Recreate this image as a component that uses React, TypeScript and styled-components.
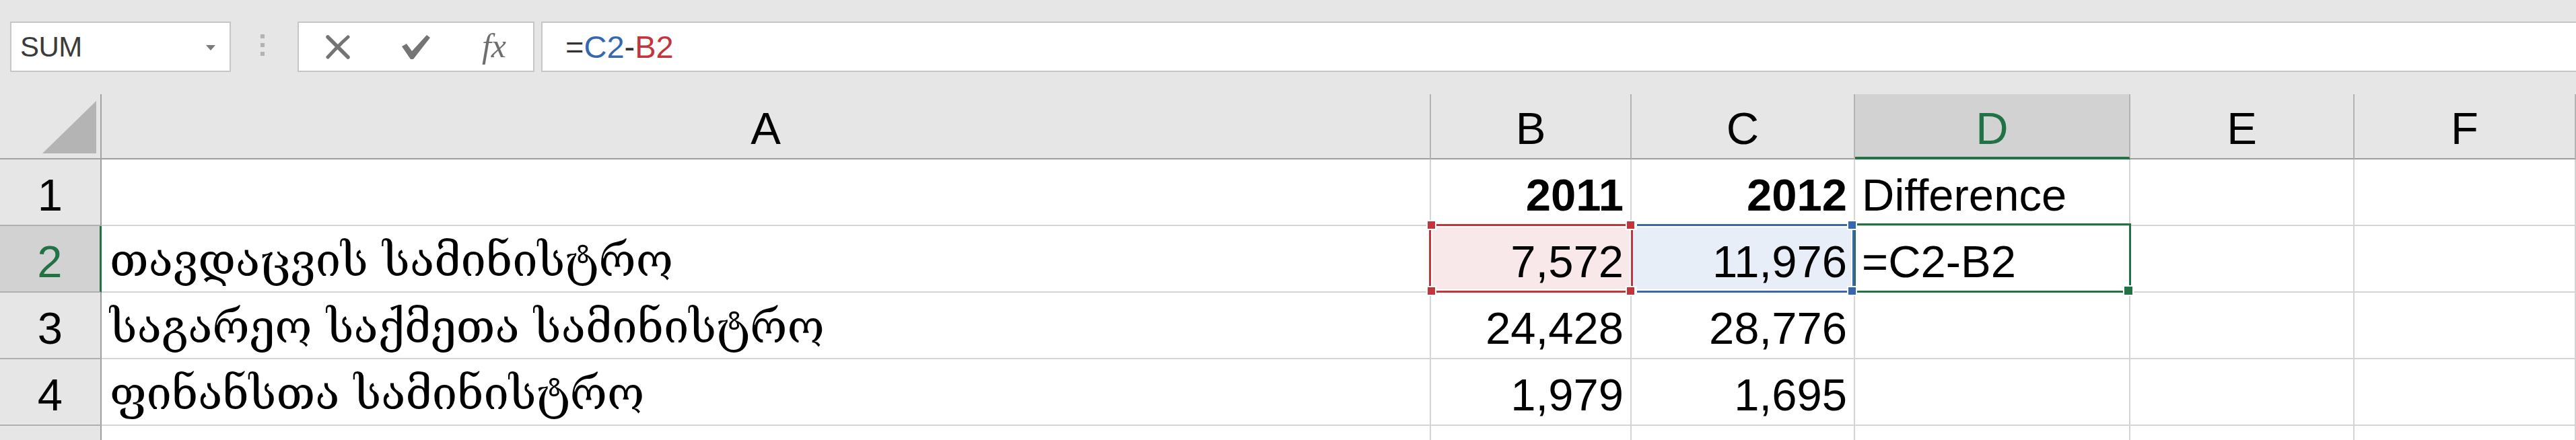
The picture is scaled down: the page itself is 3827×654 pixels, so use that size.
import React from 'react';
import styled, { createGlobalStyle, css } from 'styled-components';

const GREEN = '#217346';
const RED = '#c3343c';
const BLUE = '#3767b1';

const GlobalStyle = createGlobalStyle`
  html, body { margin: 0; padding: 0; background: #ffffff; }
  #root { width: 3827px; height: 654px; }
`;

const Window = styled.div`
  width: 3827px;
  height: 654px;
  overflow: hidden;
  background: #e6e6e6;
  font-family: "Liberation Sans", Arial, sans-serif;
  color: #000;
  display: flex;
  flex-direction: column;
`;

const FormulaBar = styled.div`
  height: 140px;
  flex: none;
  box-sizing: border-box;
  padding: 32px 0 0 15px;
  display: flex;
  align-items: flex-start;
`;

const Field = styled.div`
  box-sizing: border-box;
  height: 75px;
  background: #ffffff;
  border: 2px solid #c6c6c6;
  display: flex;
  align-items: center;
`;

const NameBox = styled(Field)`
  width: 328px;
  padding: 0 21px 0 13px;
  justify-content: space-between;
`;

const NameText = styled.span`
  font-size: 42px;
  color: #3b3b3b;
  letter-spacing: -0.5px;
`;

const DropArrow = styled.span`
  width: 0;
  height: 0;
  border-left: 7px solid transparent;
  border-right: 7px solid transparent;
  border-top: 8px solid #7a7a7a;
  margin-top: 2px;
`;

const Grip = styled.div`
  margin: 19px 0 0 44px;
  display: flex;
  flex-direction: column;
  gap: 7px;
`;

const GripDot = styled.span`
  width: 6px;
  height: 6px;
  background: #b3b3b3;
`;

const CommandBox = styled(Field)`
  width: 352px;
  margin-left: 49px;
  display: grid;
  grid-template-columns: repeat(3, 116px);
  align-items: center;
  justify-items: center;
`;

const CommandSlot = styled.span`
  display: flex;
  align-items: center;
  justify-content: center;
`;

const FxLabel = styled.span`
  font-family: "Liberation Serif", "Times New Roman", serif;
  font-style: italic;
  font-size: 50px;
  color: #6e6e6e;
  line-height: 1;
  margin-top: -4px;
`;

const FormulaInput = styled(Field)`
  flex: 1;
  margin-left: 10px;
  border-right: none;
  padding-left: 34px;
  font-size: 47px;
  color: #333333;
`;

const RefToken = styled.span<{ $color: string }>`
  color: ${(p) => p.$color};
`;

const Grid = styled.div`
  display: grid;
  grid-template-columns: 151px 1975px 298px 332px 409px 333px 1fr;
  grid-template-rows: 97px repeat(5, 99px);
  font-size: 67px;
  line-height: 68px;
  background: #ffffff;
`;

const headBase = css`
  box-sizing: border-box;
  background: #e6e6e6;
  display: flex;
  align-items: flex-end;
  justify-content: center;
`;

const Corner = styled.div`
  ${headBase};
  border-right: 2px solid #a3a3a3;
  border-bottom: 2px solid #a3a3a3;
  justify-content: flex-end;
  padding: 0 6px 7px 0;
`;

const Triangle = styled.span`
  width: 0;
  height: 0;
  border-left: 80px solid transparent;
  border-bottom: 78px solid #b4b4b4;
`;

const ColHeader = styled.div<{ $selected?: boolean }>`
  ${headBase};
  border-right: 2px solid #b4b4b4;
  border-bottom: 2px solid #9e9e9e;
  padding-bottom: 10px;
  ${(p) =>
    p.$selected &&
    css`
      background: #d2d2d2;
      color: ${GREEN};
      border-bottom: 4px solid ${GREEN};
      padding-bottom: 8px;
    `}
`;

const RowHeader = styled.div<{ $selected?: boolean }>`
  ${headBase};
  border-right: 2px solid #9e9e9e;
  border-bottom: 2px solid #b0b0b0;
  padding-bottom: 10px;
  ${(p) =>
    p.$selected &&
    css`
      background: #d2d2d2;
      color: ${GREEN};
      border-right: 3px solid ${GREEN};
    `}
`;

const Cell = styled.div<{ $align?: 'left' | 'right'; $bold?: boolean; $fill?: string }>`
  position: relative;
  box-sizing: border-box;
  background: ${(p) => p.$fill ?? '#ffffff'};
  border-right: 2px solid #d4d4d4;
  border-bottom: 2px solid #d4d4d4;
  display: flex;
  align-items: flex-end;
  justify-content: ${(p) => (p.$align === 'right' ? 'flex-end' : 'flex-start')};
  padding: 0 10px 10px 10px;
  font-weight: ${(p) => (p.$bold ? 700 : 400)};
  white-space: nowrap;
`;

const GeoText = styled.span`
  font-family: "DejaVu Serif", "DejaVu Sans", serif;
  font-size: 67px;
  margin-left: 2px;
  margin-bottom: 2px;
`;

const RangeFrame = styled.span<{ $color: string; $layer: number; $inset: string }>`
  position: absolute;
  inset: ${(p) => p.$inset};
  border: 3px solid ${(p) => p.$color};
  box-shadow: inset 0 0 0 2px #ffffff;
  z-index: ${(p) => p.$layer};
  pointer-events: none;
`;

const Handle = styled.span<{ $color: string; $corner: 'tl' | 'tr' | 'bl' | 'br' }>`
  position: absolute;
  width: 11px;
  height: 11px;
  background: ${(p) => p.$color};
  box-shadow: 0 0 0 2px #ffffff;
  ${(p) => (p.$corner[0] === 't' ? 'top: -7px;' : 'bottom: -6px;')}
  ${(p) => (p.$corner[1] === 'l' ? 'left: -5px;' : 'right: -5px;')}
`;

const ActiveFrame = styled.span`
  position: absolute;
  inset: -4px -3px -2px -2px;
  border: 3px solid ${GREEN};
  z-index: 1;
  pointer-events: none;
`;

const FillHandle = styled.span`
  position: absolute;
  right: -5px;
  bottom: -6px;
  width: 12px;
  height: 12px;
  background: ${GREEN};
  box-shadow: 0 0 0 2px #ffffff;
`;

const CancelIcon = () => (
  <svg width="38" height="36" viewBox="0 0 38 36" aria-hidden="true">
    <path d="M4 3 C14 13 24 23 34 33" stroke="#747474" strokeWidth="5.5" strokeLinecap="round" fill="none" />
    <path d="M34 3 C24 12 13 23 4 33" stroke="#747474" strokeWidth="5" strokeLinecap="round" fill="none" />
  </svg>
);

const EnterIcon = () => (
  <svg width="42" height="36" viewBox="0 0 42 36" aria-hidden="true">
    <path d="M0 17 L7 13 L15 24 L37 0 L42 4 L17 36 L13 36 Z" fill="#747474" />
  </svg>
);

type Row = { n: number; label?: string; a?: string; b?: string; c?: string; d?: string; bold?: boolean };

const rows: Row[] = [
  { n: 1, label: '1', b: '2011', c: '2012', d: 'Difference', bold: true },
  { n: 2, label: '2', a: 'თავდაცვის სამინისტრო', b: '7,572', c: '11,976', d: '=C2-B2' },
  { n: 3, label: '3', a: 'საგარეო საქმეთა სამინისტრო', b: '24,428', c: '28,776' },
  { n: 4, label: '4', a: 'ფინანსთა სამინისტრო', b: '1,979', c: '1,695' },
  { n: 5 },
];

const columns = ['A', 'B', 'C', 'D', 'E', 'F'];
const corners: Array<'tl' | 'tr' | 'bl' | 'br'> = ['tl', 'tr', 'bl', 'br'];

export default function App() {
  return (
    <>
      <GlobalStyle />
      <Window>
        <FormulaBar>
          <NameBox>
            <NameText>SUM</NameText>
            <DropArrow />
          </NameBox>
          <Grip>
            <GripDot />
            <GripDot />
            <GripDot />
          </Grip>
          <CommandBox>
            <CommandSlot>
              <CancelIcon />
            </CommandSlot>
            <CommandSlot>
              <EnterIcon />
            </CommandSlot>
            <CommandSlot>
              <FxLabel>fx</FxLabel>
            </CommandSlot>
          </CommandBox>
          <FormulaInput>
            =<RefToken $color={BLUE}>C2</RefToken>-<RefToken $color={RED}>B2</RefToken>
          </FormulaInput>
        </FormulaBar>
        <Grid>
          <Corner>
            <Triangle />
          </Corner>
          {columns.map((c) => (
            <ColHeader key={c} $selected={c === 'D'}>
              {c}
            </ColHeader>
          ))}
          {rows.map((r) => (
            <React.Fragment key={r.n}>
              <RowHeader $selected={r.n === 2}>{r.label}</RowHeader>
              <Cell>{r.a && <GeoText>{r.a}</GeoText>}</Cell>
              <Cell $align="right" $bold={r.bold} $fill={r.n === 2 ? '#f9e8e9' : undefined}>
                {r.b}
                {r.n === 2 && (
                  <RangeFrame $color={RED} $layer={3} $inset="-3px -4px -2px -3px">
                    {corners.map((k) => (
                      <Handle key={k} $color={RED} $corner={k} />
                    ))}
                  </RangeFrame>
                )}
              </Cell>
              <Cell $align="right" $bold={r.bold} $fill={r.n === 2 ? '#e8eef8' : undefined}>
                {r.c}
                {r.n === 2 && (
                  <RangeFrame $color={BLUE} $layer={2} $inset="-3px -1px -2px -3px">
                    {corners.map((k) => (
                      <Handle key={k} $color={BLUE} $corner={k} />
                    ))}
                  </RangeFrame>
                )}
              </Cell>
              <Cell>
                {r.d}
                {r.n === 2 && (
                  <ActiveFrame>
                    <FillHandle />
                  </ActiveFrame>
                )}
              </Cell>
              <Cell />
              <Cell />
            </React.Fragment>
          ))}
        </Grid>
      </Window>
    </>
  );
}
